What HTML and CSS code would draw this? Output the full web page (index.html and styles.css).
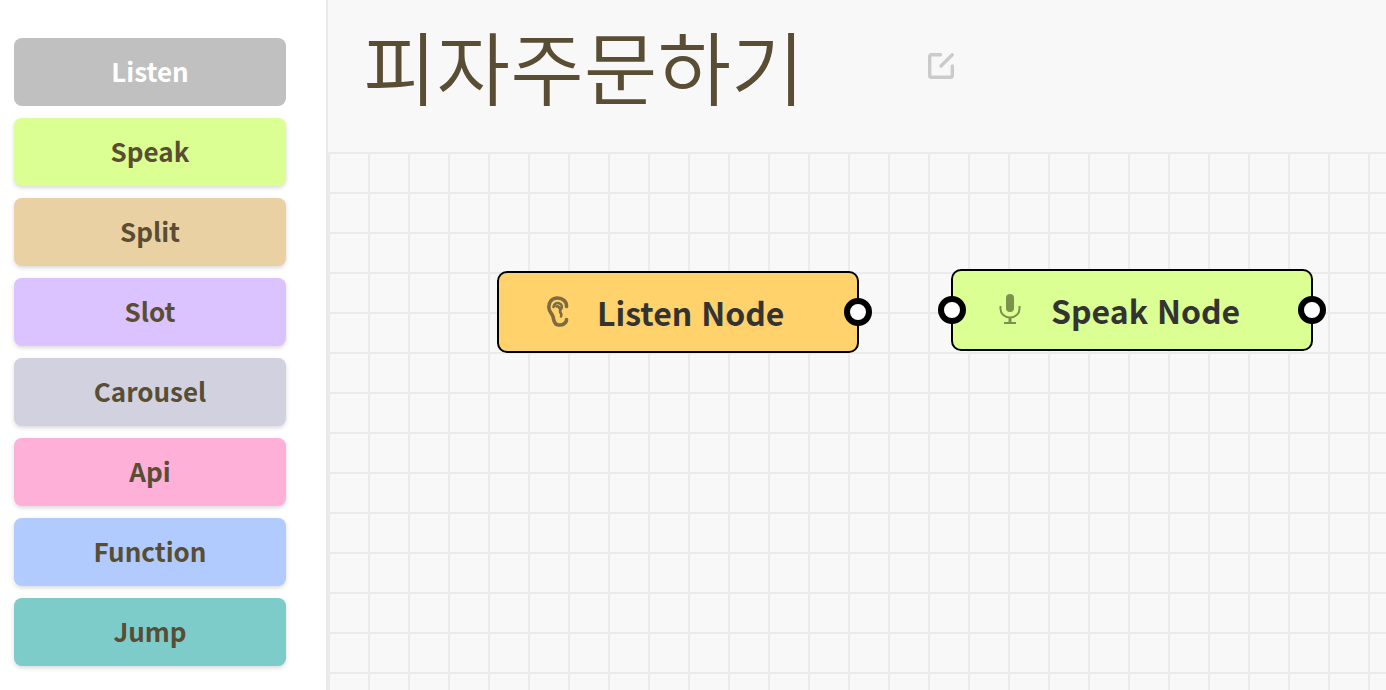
FILE: index.html
```html
<!DOCTYPE html>
<html lang="ko">
<head>
<meta charset="utf-8">
<title>피자주문하기</title>
<link rel="stylesheet" href="styles.css">
</head>
<body>
<div class="app">
  <aside class="palette">
    <button class="block listen" type="button" disabled>Listen</button>
    <button class="block speak" type="button">Speak</button>
    <button class="block split" type="button">Split</button>
    <button class="block slot" type="button">Slot</button>
    <button class="block carousel" type="button">Carousel</button>
    <button class="block api" type="button">Api</button>
    <button class="block function" type="button">Function</button>
    <button class="block jump" type="button">Jump</button>
  </aside>
  <main class="editor">
    <header class="header">
      <h1 class="title">피자주문하기</h1>
      <button class="edit" type="button" aria-label="Edit title">
        <svg width="28" height="28" viewBox="0 0 28 28" fill="none" stroke="#cbcbcb" stroke-width="3.400" stroke-linecap="round" stroke-linejoin="round"><path d="M13.500 2.700H4.500Q2.700 2.700 2.700 4.500V23.500Q2.700 25.300 4.500 25.300H23.500Q25.300 25.300 25.300 23.500V14M14 14 25.300 2.700" /></svg>
      </button>
    </header>
    <section class="canvas">
      <div class="node node-listen">
        <svg class="icon" width="24" height="32" viewBox="0 0 24 32" fill="none" stroke="#7e6b40" stroke-width="3.600" stroke-linecap="round"><path d="M21.500 10.500C22 5.500 17.500 2 12.500 2C6.500 2 3.500 6.500 3.800 11.500C4 15.500 7 17.500 8 20.500C9 24 8.500 28.500 13.500 29C18 29.500 21.500 27 21.500 23.500"/><path stroke-width="2.600" d="M8.500 11C9 7.500 11.500 6.500 14 7.200C17 8 17.500 11 16 13C14.500 15 14.500 16 16 17.500C17 18.500 16.500 19.500 16 20.500M11.500 10.500Q13.500 9.500 15 13"/></svg>
        <span class="label">Listen Node</span>
        <span class="port out"></span>
      </div>
      <div class="node node-speak">
        <svg class="icon" width="24" height="32" viewBox="0 0 24 32" fill="none" stroke="#7d914f" stroke-width="2"><rect x="7" y="0" width="8" height="18" rx="4" fill="#7d914f" stroke="none"/><path d="M1.500 12v3a9.500 8.500 0 0 0 19 0V12"/><path d="M11 23.500v5" stroke-width="3"/><path d="M5 29h12"/></svg>
        <span class="label">Speak Node</span>
        <span class="port in"></span>
        <span class="port out"></span>
      </div>
    </section>
  </main>
</div>
</body>
</html>
```
FILE: styles.css
```css
* {
  box-sizing: border-box;
}

body {
  margin: 0;
  font-family: "Noto Sans CJK KR", "Noto Sans", sans-serif;
  color: #594d34;
  background: #fff;
}

.app {
  display: flex;
  min-height: 100vh;
}

.palette {
  display: flex;
  flex-direction: column;
  flex: 0 0 328px;
  gap: 12px;
  padding: 38px 40px 24px 14px;
  border-right: 2px solid #e9e9e9;
}

.block {
  height: 68px;
  padding: 0 0 2px;
  border: 0;
  border-radius: 8px;
  font: bold 26px/40px "Noto Sans CJK KR", "Noto Sans", sans-serif;
  color: #594d34;
  box-shadow: 0 2px 4px rgba(0, 0, 0, 0.15);
}

.listen { background: #c0c0c0; color: #fff; box-shadow: none; }
.speak { background: #dbff92; }
.split { background: #ead1a4; }
.slot { background: #dbc3ff; }
.carousel { background: #d2d1df; }
.api { background: #ffb0d8; }
.function { background: #b1cbff; }
.jump { background: #7eccc9; }

.editor {
  display: flex;
  flex-direction: column;
  flex: 1;
  min-width: 0;
  background: #f8f8f8;
}

.header {
  display: flex;
  align-items: flex-start;
  gap: 122px;
  height: 152px;
  padding: 6px 35px;
}

.title {
  margin: 0;
  font-family: "Noto Sans CJK KR DemiLight", "Noto Sans CJK KR", sans-serif;
  font-size: 80px;
  font-weight: 350;
  line-height: 116px;
  white-space: nowrap;
}

.edit {
  margin-top: 46px;
  padding: 0;
  border: 0;
  background: none;
  line-height: 0;
}

.canvas {
  position: relative;
  flex: 1;
  overflow: hidden;
  background-image:
    linear-gradient(#ebebeb 2px, transparent 2px),
    linear-gradient(90deg, #ebebeb 2px, transparent 2px);
  background-size: 40px 40px;
}

.node {
  position: absolute;
  display: flex;
  align-items: center;
  gap: 28px;
  width: 362px;
  height: 82px;
  padding-left: 46px;
  border: 2px solid #000;
  border-radius: 10px;
}

.node-listen {
  left: 169px;
  top: 119px;
  background: #ffd26b;
}

.node-speak {
  left: 623px;
  top: 117px;
  background: #dbff92;
}

.label {
  font-size: 32px;
  font-weight: bold;
  line-height: 52px;
  color: #333;
}

.port {
  position: absolute;
  top: 25px;
  width: 28px;
  height: 28px;
  border: 6px solid #000;
  border-radius: 50%;
  background: #fff;
}

.in { left: -15px; }
.out { right: -15px; }
```
